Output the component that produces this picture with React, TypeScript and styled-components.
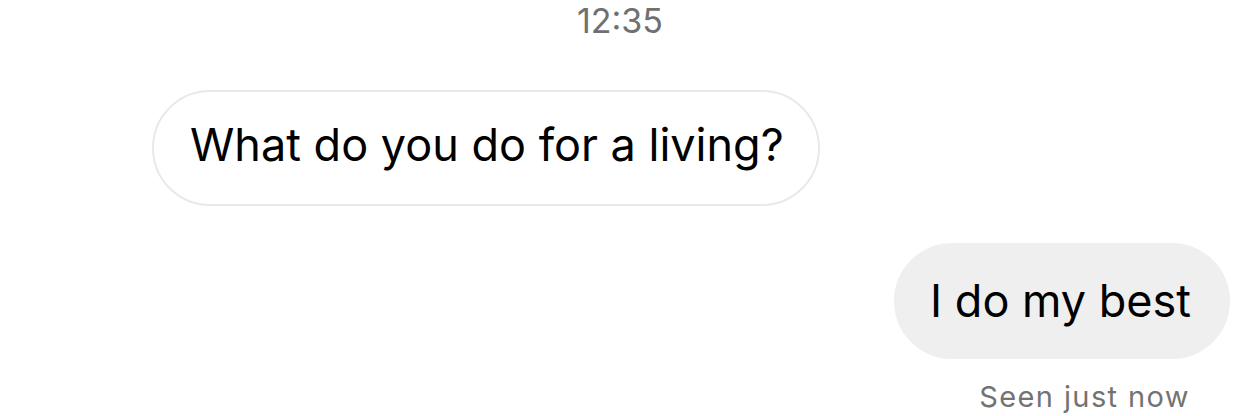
import React from "react";
import styled, { createGlobalStyle } from "styled-components";

const GlobalStyle = createGlobalStyle`
  html, body {
    margin: 0;
    padding: 0;
    background: #ffffff;
  }
  body {
    font-family: Inter, "Liberation Sans", Arial, sans-serif;
    -webkit-font-smoothing: antialiased;
  }
`;

const Thread = styled.div`
  width: 1249px;
  height: 416px;
  box-sizing: border-box;
  padding: 4px 19px 0 152px;
  display: flex;
  flex-direction: column;
  overflow: hidden;
`;

const Timestamp = styled.div`
  align-self: center;
  margin-left: -142px;
  font-size: 34px;
  line-height: 34px;
  color: #707070;
  font-weight: 400;
`;

const Row = styled.div<{ $mine?: boolean }>`
  display: flex;
  justify-content: ${(p) => (p.$mine ? "flex-end" : "flex-start")};
  margin-top: ${(p) => (p.$mine ? "37px" : "52px")};
`;

const Bubble = styled.div<{ $mine?: boolean }>`
  box-sizing: border-box;
  height: 116px;
  border-radius: 58px;
  font-size: 45px;
  line-height: 45px;
  color: #000000;
  white-space: nowrap;
  background: ${(p) => (p.$mine ? "#efefef" : "#ffffff")};
  border: 2px solid ${(p) => (p.$mine ? "#efefef" : "#e9e9e9")};
  padding: ${(p) => (p.$mine ? "33px 37px 0 34px" : "30px 34px 0 36px")};
`;

const Status = styled.div`
  align-self: flex-end;
  margin-top: 23px;
  margin-right: 40px;
  font-size: 29px;
  line-height: 29px;
  letter-spacing: 1.4px;
  color: #737373;
`;

export default function App() {
  return (
    <>
      <GlobalStyle />
      <Thread>
        <Timestamp>12:35</Timestamp>
        <Row>
          <Bubble>What do you do for a living?</Bubble>
        </Row>
        <Row $mine>
          <Bubble $mine>I do my best</Bubble>
        </Row>
        <Status>Seen just now</Status>
      </Thread>
    </>
  );
}
